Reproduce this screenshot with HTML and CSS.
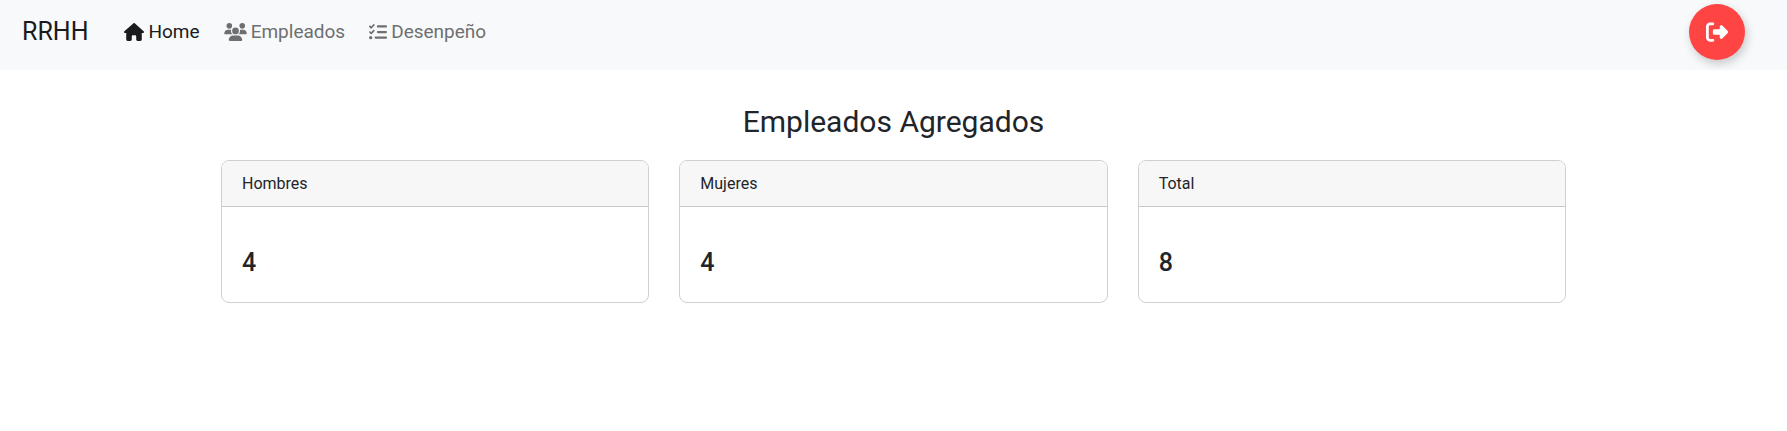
FILE: index.html
```
<!DOCTYPE html>
<html lang="es">
<head>
<meta charset="utf-8">
<meta name="viewport" content="width=device-width, initial-scale=1">
<title>RRHH</title>
<link rel="stylesheet" href="styles.css">
</head>
<body>
<header class="navbar">
  <a class="brand" href="#">RRHH</a>
  <nav class="nav">
    <a class="nav-link active" href="#" aria-current="page">
      <svg class="icon icon-home" viewBox="0 0 576 512" aria-hidden="true"><path d="M575.8 255.5c0 18-15 32.1-32 32.1h-32l.7 160.2c0 2.7-.2 5.4-.5 8.1V472c0 22.1-17.9 40-40 40H456c-1.1 0-2.2 0-3.3-.1c-1.4 .1-2.8 .1-4.2 .1H416 392c-22.1 0-40-17.9-40-40V448 384c0-17.7-14.3-32-32-32H256c-17.7 0-32 14.3-32 32v64 24c0 22.1-17.9 40-40 40H160 128.1c-1.5 0-3-.1-4.5-.2c-1.2 .1-2.4 .2-3.6 .2H104c-22.1 0-40-17.9-40-40V360c0-.9 0-1.9 .1-2.8V287.6H32c-18 0-32-14-32-32.1c0-9 3-17 10-24L266.4 8c7-7 15-8 22-8s15 2 21 7L564.8 231.5c8 7 12 15 11 24z"/></svg>
      <span>Home</span>
    </a>
    <a class="nav-link" href="#">
      <svg class="icon icon-users" viewBox="0 0 640 512" aria-hidden="true"><path d="M144 0a80 80 0 1 1 0 160A80 80 0 1 1 144 0zM512 0a80 80 0 1 1 0 160A80 80 0 1 1 512 0zM0 298.7C0 239.8 47.8 192 106.7 192h42.7c15.9 0 31 3.5 44.6 9.7c-1.3 7.2-1.9 14.7-1.9 22.3c0 38.2 16.8 72.5 43.3 96c-.2 0-.4 0-.7 0H21.3C9.6 320 0 310.4 0 298.7zM405.3 320c-.2 0-.4 0-.7 0c26.6-23.5 43.3-57.8 43.3-96c0-7.6-.7-15-1.9-22.3c13.6-6.3 28.7-9.7 44.6-9.7h42.7C592.2 192 640 239.8 640 298.7c0 11.8-9.6 21.3-21.3 21.3H405.3zM224 224a96 96 0 1 1 192 0 96 96 0 1 1 -192 0zM128 485.3C128 411.7 187.7 352 261.3 352H378.7C452.3 352 512 411.7 512 485.3c0 14.7-11.9 26.7-26.7 26.7H154.7c-14.7 0-26.7-11.9-26.7-26.7z"/></svg>
      <span>Empleados</span>
    </a>
    <a class="nav-link" href="#">
      <svg class="icon icon-list" viewBox="0 0 512 512" aria-hidden="true"><path d="M152.1 38.2c9.9 8.9 10.7 24 1.8 33.9l-72 80c-4.4 4.9-10.6 7.8-17.2 7.9s-12.9-2.4-17.6-7L7 113C-2.3 103.6-2.3 88.4 7 79s24.6-9.4 33.9 0l22.1 22.1 55.1-61.2c8.9-9.9 24-10.7 33.9-1.8zm0 160c9.9 8.9 10.7 24 1.8 33.9l-72 80c-4.4 4.9-10.6 7.8-17.2 7.9s-12.9-2.4-17.6-7L7 273c-9.4-9.4-9.4-24.6 0-33.9s24.6-9.4 33.9 0l22.1 22.1 55.1-61.2c8.9-9.9 24-10.7 33.9-1.8zM224 96c0-17.7 14.3-32 32-32H480c17.7 0 32 14.3 32 32s-14.3 32-32 32H256c-17.7 0-32-14.3-32-32zm0 160c0-17.7 14.3-32 32-32H480c17.7 0 32 14.3 32 32s-14.3 32-32 32H256c-17.7 0-32-14.3-32-32zM160 416c0-17.7 14.3-32 32-32H480c17.7 0 32 14.3 32 32s-14.3 32-32 32H192c-17.7 0-32-14.3-32-32zM48 368a48 48 0 1 1 0 96 48 48 0 1 1 0-96z"/></svg>
      <span>Desenpeño</span>
    </a>
  </nav>
  <button class="logout" type="button" aria-label="Salir">
    <svg class="icon-logout" viewBox="0 0 512 512" aria-hidden="true"><path d="M377.9 105.9L500.7 228.7c7.2 7.2 11.3 17.1 11.3 27.3s-4.1 20.1-11.3 27.3L377.9 406.1c-6.4 6.4-15 9.9-24 9.9c-18.7 0-33.9-15.2-33.9-33.9l0-62.1-128 0c-17.7 0-32-14.3-32-32l0-64c0-17.7 14.3-32 32-32l128 0 0-62.1c0-18.7 15.2-33.9 33.9-33.9c9 0 17.6 3.6 24 9.9zM160 96L96 96c-17.7 0-32 14.3-32 32l0 256c0 17.7 14.3 32 32 32l64 0c17.7 0 32 14.3 32 32s-14.3 32-32 32l-64 0c-53 0-96-43-96-96L0 128C0 75 43 32 96 32l64 0c17.7 0 32 14.3 32 32s-14.3 32-32 32z"/></svg>
  </button>
</header>
<main class="content">
  <h1 class="title">Empleados Agregados</h1>
  <div class="cards">
    <section class="card">
      <h2 class="card-header">Hombres</h2>
      <p class="card-value">4</p>
    </section>
    <section class="card">
      <h2 class="card-header">Mujeres</h2>
      <p class="card-value">4</p>
    </section>
    <section class="card">
      <h2 class="card-header">Total</h2>
      <p class="card-value">8</p>
    </section>
  </div>
</main>
</body>
</html>
```
FILE: styles.css
```
* {
  box-sizing: border-box;
}

body {
  margin: 0;
  background: #fff;
  color: #212529;
  font-family: Roboto, "Liberation Sans", sans-serif;
}

.navbar {
  display: flex;
  align-items: center;
  gap: 36px;
  padding: 4px 42px 10px 22px;
  background: #f8f9fb;
}

.brand {
  color: #1a1b1c;
  font-size: 25px;
  line-height: 32px;
  text-decoration: none;
}

.nav {
  display: flex;
  gap: 24px;
}

.nav-link {
  display: flex;
  align-items: center;
  gap: 4px;
  color: #6e6f70;
  font-size: 19px;
  line-height: 24px;
  text-decoration: none;
}

.nav-link.active {
  color: #1a1b1c;
}

.icon {
  height: 18px;
  fill: currentColor;
}

.icon-home {
  width: 20px;
}

.icon-users {
  width: 23px;
}

.icon-list {
  width: 18px;
}

.logout {
  display: flex;
  align-items: center;
  justify-content: center;
  width: 56px;
  height: 56px;
  margin-left: auto;
  padding: 0;
  border: 0;
  border-radius: 50%;
  background: #ff4444;
  color: #fff;
  box-shadow: 2px 4px 10px rgba(0, 0, 0, 0.2);
  cursor: pointer;
}

.icon-logout {
  width: 22px;
  height: 22px;
  fill: currentColor;
}

.content {
  max-width: 1385px;
  margin: 0 auto;
  padding: 32px 20px;
}

.title {
  margin: 0 0 18px;
  font-size: 30px;
  font-weight: 400;
  line-height: 40px;
  text-align: center;
}

.cards {
  display: grid;
  grid-template-columns: repeat(auto-fit, minmax(240px, 1fr));
  gap: 30px;
}

.card {
  border: 1px solid #d0d0d1;
  border-radius: 8px;
  overflow: hidden;
}

.card-header {
  margin: 0;
  padding: 10px 20px;
  border-bottom: 1px solid #c8c8c9;
  background: #f7f7f7;
  font-size: 16px;
  font-weight: 400;
  line-height: 25px;
}

.card-value {
  margin: 0;
  padding: 40px 20px 24px;
  font-size: 25px;
  font-weight: 500;
  line-height: 31px;
}
```
